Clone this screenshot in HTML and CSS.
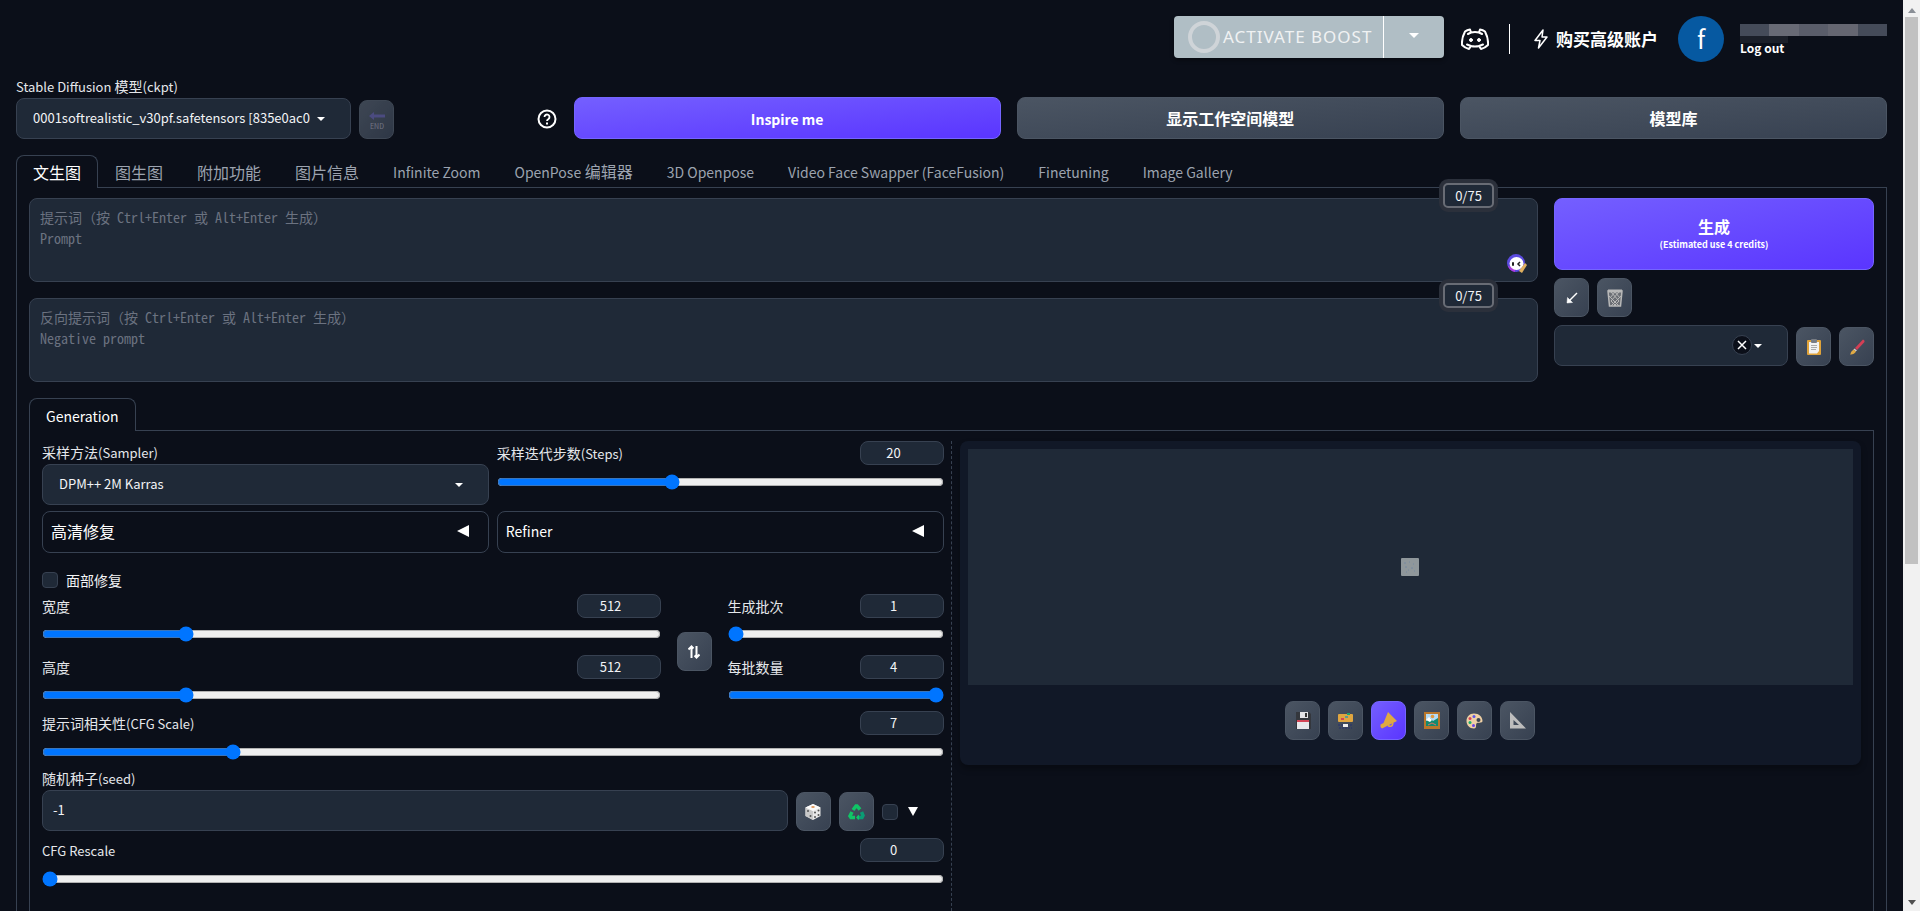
FILE: index.html
```html
<!DOCTYPE html>
<html lang="zh-CN">
<head>
  <meta charset="UTF-8">
  <title>Stable Diffusion</title>
  <link rel="stylesheet" href="styles.css">
</head>
<body>
<div class="page">

  <!-- Header -->
  <header class="topbar">
    <div class="boost">
      <button class="boost-main"><span class="boost-ring"></span>ACTIVATE BOOST</button>
      <button class="boost-drop" aria-label="Boost options"><span class="caret"></span></button>
    </div>
    <a class="discord" href="#" aria-label="Discord">
      <svg width="28" height="24" viewBox="0 0 28 24" fill="none" stroke="#fff" stroke-width="2" stroke-linejoin="round" stroke-linecap="round">
        <path d="M10 5.500Q14 4.500 18 5.500L19 2.500Q22 3 24 4.500Q27.500 11 27 18Q24 21 20 22L18 19Q14 20 10 19L8 22Q4 21 1 18Q.500 11 4 4.500Q6 3 9 2.500L10 5.500L7 7M18 5.500L21 7M6 17.500L10 19M18 19L22 17.500"/>
        <circle cx="10" cy="13" r="1.500" fill="#fff" stroke-width="1"/>
        <circle cx="18" cy="13" r="1.500" fill="#fff" stroke-width="1"/>
      </svg>
    </a>
    <span class="divider"></span>
    <a class="premium" href="#">
      <svg width="14" height="20" viewBox="0 0 14 20" fill="none" stroke="#fff" stroke-width="1.500" stroke-linejoin="round"><path d="M9 1L1 11.500H6L4.500 19L13 8H8L9 1Z"/></svg>
      购买高级账户
    </a>
    <div class="user">
      <span class="avatar">f</span>
      <div class="user-info">
        <div class="user-name"><i></i><i></i><i></i><i></i><i></i></div>
        <a href="#">Log out</a>
        <span class="user-mask"></span>
      </div>
    </div>
  </header>

  <!-- Model row -->
  <div class="model-row">
    <div class="model-box">
      <div class="field model-field">
        <label for="model"><span class="latin">Stable Diffusion</span> 模型<span class="latin">(ckpt)</span></label>
        <div class="select">
          <select id="model"><option>0001softrealistic_v30pf.safetensors [835e0ac023]</option></select>
          <span class="caret"></span>
        </div>
      </div>
      <button class="tool dim" aria-label="Refresh">
        <svg width="18" height="20" viewBox="0 0 18 20"><path d="M1 6L6 2V4.500H17V7.500H6V10Z" fill="#5b5a9a"/><text x="9" y="19" text-anchor="middle" class="end-text">END</text></svg>
      </button>
    </div>
    <button class="help" aria-label="Help">
      <svg width="20" height="20" viewBox="0 0 20 20" fill="none" stroke="#fff" stroke-width="2"><circle cx="10" cy="10" r="8.500"/><path d="M7.500 8A2.500 2.500 0 1 1 11.500 10C10.400 10.700 10 11 10 12" stroke-width="1.800"/><path d="M10 13.500V15.500"/></svg>
    </button>
    <div class="model-actions">
      <button class="btn primary"><span class="latin-lg">Inspire me</span></button>
      <button class="btn">显示工作空间模型</button>
      <button class="btn">模型库</button>
    </div>
  </div>

  <!-- Main tabs -->
  <nav class="tabs main-tabs">
    <button class="tab active">文生图</button>
    <button class="tab">图生图</button>
    <button class="tab">附加功能</button>
    <button class="tab">图片信息</button>
    <button class="tab"><span class="latin-lg">Infinite Zoom</span></button>
    <button class="tab"><span class="latin-lg">OpenPose</span> 编辑器</button>
    <button class="tab"><span class="latin-lg">3D Openpose</span></button>
    <button class="tab"><span class="latin-lg">Video Face Swapper (FaceFusion)</span></button>
    <button class="tab"><span class="latin-lg">Finetuning</span></button>
    <button class="tab"><span class="latin-lg">Image Gallery</span></button>
  </nav>

  <main class="panel">
    <div class="prompt-row">
      <div class="prompts">
        <div class="prompt">
          <textarea aria-label="Prompt" placeholder="提示词（按 Ctrl+Enter 或 Alt+Enter 生成）&#10;Prompt"></textarea>
          <span class="counter">0/75</span>
          <svg class="face" width="20" height="20" viewBox="0 0 20 20">
            <circle cx="9" cy="9" r="9" fill="#5b4be0"/><path d="M1 12A9 9 0 0 0 8 18L8 14Z" fill="#b03be0"/>
            <ellipse cx="9.500" cy="9.500" rx="7" ry="6.500" fill="#fff"/>
            <rect x="5" y="8" width="2" height="4" rx="1" fill="#222"/><path d="M13 8L11 10L13 12" stroke="#222" stroke-width="1.500" fill="none"/>
            <path d="M12 17L18 9L20 11L15 19Z" fill="#e0b060"/>
          </svg>
        </div>
        <div class="prompt">
          <textarea aria-label="Negative prompt" placeholder="反向提示词（按 Ctrl+Enter 或 Alt+Enter 生成）&#10;Negative prompt"></textarea>
          <span class="counter">0/75</span>
        </div>
      </div>

      <div class="generate-col">
        <button class="btn primary generate">生成<small>(Estimated use 4 credits)</small></button>
        <div class="tools">
          <button class="tool" aria-label="Read parameters">
            <svg width="14" height="14" viewBox="0 0 14 14" stroke="#fff" stroke-width="1.500" fill="#fff"><path d="M12 2L4 10"/><path d="M2.500 6.500L7.500 11.500L2 12Z" stroke-width=".5"/></svg>
          </button>
          <button class="tool" aria-label="Clear prompt">
            <svg width="16" height="18" viewBox="0 0 16 18" fill="none" stroke="#b8b8b8"><path d="M1 2H15L13.500 17H2.500Z" stroke-width="1.500" fill="#6b6e74"/><path d="M1 2H15" stroke-width="3"/><path d="M4 3L12 12L7 17M8 3L13 9M12 3L4 12L9 17M8 3L3 9M2 7L12 17M14 7L4 17"/></svg>
          </button>
        </div>
        <div class="tools styles-row">
          <div class="select styles-select">
            <select aria-label="Styles"><option></option></select>
            <span class="clear"><svg width="10" height="10" viewBox="0 0 10 10" stroke="#fff" stroke-width="1.500"><path d="M1 1L9 9M9 1L1 9"/></svg></span>
            <span class="caret"></span>
          </div>
          <button class="tool" aria-label="Apply styles">
            <svg width="14" height="18" viewBox="0 0 14 18"><rect x="0" y="2" width="14" height="15" rx="1" fill="#e0a33a"/><path d="M2 4H12V13L10 15.500H2Z" fill="#f2f2f2"/><rect x="4" y="1" width="6" height="4" rx="1" fill="#777c84"/><path d="M4 7.500H10M4 9.500H10M4 11.500H9" stroke="#aaa"/></svg>
          </button>
          <button class="tool" aria-label="Save style">
            <svg width="16" height="16" viewBox="0 0 16 16"><path d="M6 9L14 .5Q16 1 15.500 3L8 11Z" fill="#d33f55"/><path d="M5.500 9.500L8 11.500L6.500 12.500L4.500 10.500Z" fill="#ccc"/><path d="M4.500 10.500L7 12.500Q5 16 1 15.500Q2 14 2 13Z" fill="#e0aa44"/></svg>
          </button>
        </div>
      </div>
    </div>

    <nav class="tabs">
      <button class="tab active"><span class="latin-lg">Generation</span></button>
    </nav>

    <div class="panel generation">
      <div class="settings">
        <div class="pair">
          <div class="field">
            <label for="sampler">采样方法<span class="latin">(Sampler)</span></label>
            <div class="select">
              <select id="sampler"><option>DPM++ 2M Karras</option></select>
              <span class="caret"></span>
            </div>
          </div>
          <div class="slider">
            <div class="slider-head"><label for="steps">采样迭代步数<span class="latin">(Steps)</span></label><input type="number" id="steps" value="20"></div>
            <input type="range" aria-label="Steps" min="1" max="50" value="20">
          </div>
        </div>

        <div class="pair accordions">
          <button class="accordion">高清修复<svg width="12" height="12" viewBox="0 0 12 12" fill="#fff"><path d="M0 6L12 0V12Z"/></svg></button>
          <button class="accordion"><span class="latin-lg">Refiner</span><svg width="12" height="12" viewBox="0 0 12 12" fill="#fff"><path d="M0 6L12 0V12Z"/></svg></button>
        </div>

        <label class="check"><input type="checkbox">面部修复</label>

        <div class="size-row">
          <div class="sliders size-sliders">
            <div class="slider">
              <div class="slider-head"><label for="width">宽度</label><input type="number" id="width" value="512"></div>
              <input type="range" aria-label="Width" min="64" max="2048" value="512">
            </div>
            <div class="slider">
              <div class="slider-head"><label for="height">高度</label><input type="number" id="height" value="512"></div>
              <input type="range" aria-label="Height" min="64" max="2048" value="512">
            </div>
          </div>
          <button class="tool swap" aria-label="Swap width and height">
            <svg width="12" height="14" viewBox="0 0 12 14" fill="none" stroke="#fff" stroke-width="2"><path d="M3.500 13V2M.5 4.500L3.500 1.500L5.500 3.500M8.500 1V12M6.500 10.500L8.500 12.500L11.500 9.500"/></svg>
          </button>
          <div class="sliders batch-sliders">
            <div class="slider">
              <div class="slider-head"><label for="batches">生成批次</label><input type="number" id="batches" value="1"></div>
              <input type="range" aria-label="Batch count" min="1" max="4" value="1">
            </div>
            <div class="slider">
              <div class="slider-head"><label for="batch-size">每批数量</label><input type="number" id="batch-size" value="4"></div>
              <input type="range" aria-label="Batch size" min="1" max="4" value="4">
            </div>
          </div>
        </div>

        <div class="slider">
          <div class="slider-head"><label for="cfg">提示词相关性<span class="latin">(CFG Scale)</span></label><input type="number" id="cfg" value="7"></div>
          <input type="range" aria-label="CFG Scale" min="1" max="30" value="7">
        </div>

        <div class="seed-row">
          <div class="field seed-field">
            <label for="seed">随机种子<span class="latin">(seed)</span></label>
            <input class="seed" type="text" id="seed" value="-1">
          </div>
          <button class="tool" aria-label="Random seed">
            <svg width="16" height="18" viewBox="0 0 16 18"><path d="M8 1L15.500 4.500V13L8 17L.5 13V4.500Z" fill="#e8e8e8"/><path d="M.5 4.500L8 8V17L.5 13Z" fill="#c9c9c9"/><path d="M.5 4.500L8 1L15.500 4.500L8 8Z" fill="#fafafa"/><ellipse cx="8" cy="4" rx="1.800" ry="1" fill="#e09a60"/><g fill="#555"><circle cx="3" cy="8" r="1"/><circle cx="5.500" cy="13" r="1"/><circle cx="10" cy="9.500" r="1"/><circle cx="13.500" cy="7.500" r="1"/><circle cx="10" cy="14" r="1"/><circle cx="13.500" cy="12" r="1"/></g></svg>
          </button>
          <button class="tool" aria-label="Reuse seed">
            <svg width="17" height="16" viewBox="0 0 17 16" fill="none" stroke="#10c566" stroke-width="3.500"><path d="M5 6L8 2H9L12 5.500"/><path d="M13.500 8L15 11.500L14 13.500H9" stroke="#0a9c74"/><path d="M7 13.500H3L2 12L4 8"/><path d="M8 13.500L11 10.500V16Z" stroke="none" fill="#10c566"/></svg>
          </button>
          <label class="extra"><input type="checkbox" aria-label="Extra"><svg width="10" height="9" viewBox="0 0 10 9" fill="#fff"><path d="M0 0H10L5 9Z"/></svg></label>
        </div>

        <div class="slider">
          <div class="slider-head"><label for="rescale"><span class="latin">CFG Rescale</span></label><input type="number" id="rescale" value="0"></div>
          <input type="range" aria-label="CFG Rescale" min="0" max="1" value="0">
        </div>
      </div>

      <section class="output">
        <div class="output-box">
          <div class="preview">
            <svg width="18" height="18" viewBox="0 0 18 18"><rect width="18" height="18" rx="1" fill="#8f979b"/><path d="M3 5H5M8 4H9M12 6H13M4 9H6M10 10H12M7 12H8M13 13H14M5 14H6" stroke="#7488a0"/></svg>
          </div>
          <div class="tools output-tools">
            <button class="tool" aria-label="Save">
              <svg width="16" height="18" viewBox="0 0 16 18"><path d="M1 0H14L16 2V17H1Z" fill="#34373d"/><rect x="5" y="0" width="8" height="6" fill="#e3e3e6"/><rect x="10" y="1" width="2" height="4" fill="#333"/><rect x="2" y="8" width="12" height="9" fill="#e8e8ec"/><rect x="2" y="8" width="12" height="2" fill="#d34557"/></svg>
            </button>
            <button class="tool" aria-label="Save zip">
              <svg width="17" height="16" viewBox="0 0 17 16"><rect x="1" y="1" width="15" height="8" rx="1" fill="#e0a640"/><path d="M10 1H13" stroke="#20a070" stroke-width="2"/><path d="M8 4H11" stroke="#5d9a94" stroke-width="2"/><path d="M4 6H7" stroke="#d34557" stroke-width="2"/><path d="M1 12H16M2 15H15" stroke="#27306f" stroke-dasharray="2 1"/><rect x="6" y="11" width="5" height="3" fill="#eee"/></svg>
            </button>
            <button class="tool primary" aria-label="Send to img2img">
              <svg width="17" height="17" viewBox="0 0 17 17"><path d="M8 0L17 9L2 16.500L.5 15V12.500L3.500 11Z" fill="#e0aa40"/><path d="M8 13.500Q12 16 13 11" fill="none" stroke="#e0aa40" stroke-width="1.500"/></svg>
            </button>
            <button class="tool" aria-label="Send to inpaint">
              <svg width="16" height="17" viewBox="0 0 16 17"><rect width="16" height="17" fill="#b9772c"/><rect x="2" y="2" width="12" height="12" fill="#b5dcf5"/><path d="M2 9L6 6L9 9L14 6V14H2Z" fill="#128a70"/><path d="M2 8L5 5L8 8L6 10Z" fill="#fff"/><circle cx="8.500" cy="4.500" r="1.800" fill="#e09a40"/><path d="M4 13L8 11L12 13" stroke="#e07060" fill="none"/></svg>
            </button>
            <button class="tool" aria-label="Send to extras">
              <svg width="17" height="16" viewBox="0 0 17 16"><path d="M8 .5C13 .5 16.500 4 16.500 8C16.500 10 13 9.500 11 10C9 10.500 11.500 15.500 8 15.500C3.500 15.500 .5 12 .5 8S3.500 .5 8 .5Z" fill="#efd0a5"/><circle cx="12.500" cy="7" r="2" fill="#3d4654"/><circle cx="8" cy="3.500" r="1.500" fill="#5a55e8"/><circle cx="4" cy="5.500" r="1.500" fill="#d34557"/><circle cx="4" cy="9.500" r="1.500" fill="#19b070"/><circle cx="7.500" cy="12.500" r="1.500" fill="#6a45e8"/></svg>
            </button>
            <button class="tool" aria-label="Upscale">
              <svg width="16" height="17" viewBox="0 0 16 17"><path d="M0 0L16 16.500H0ZM3.500 8V13H9Z" fill="#bdbdbd" fill-rule="evenodd"/></svg>
            </button>
          </div>
        </div>
      </section>
    </div>
  </main>
</div>

<!-- Scrollbar -->
<div class="scrollbar">
  <span class="arrow up"></span>
  <span class="thumb"></span>
  <span class="arrow down"></span>
</div>
</body>
</html>
```
FILE: styles.css
```css
* {
    box-sizing: border-box;
}

body {
    margin: 0;
    display: flex;
    height: 100vh;
    overflow: hidden;
    background: #0b0f19;
    color: #f3f4f6;
    font-family: "Noto Sans CJK SC", sans-serif;
    font-size: 14px;
    line-height: 20px;
}

button, input, select, textarea {
    font: inherit;
    color: inherit;
    margin: 0;
}

button {
    padding: 0;
    border: none;
    background: none;
}

a {
    color: white;
    text-decoration: none;
}

svg {
    display: block;
    flex: none;
}

/* Latin letters run large next to the Chinese ones */
.latin {
    font-size: 13px;
}

.latin-lg {
    font-size: 14px;
}

.page {
    flex: 1;
    min-width: 0;
    display: flex;
    flex-direction: column;
    padding: 16px 16px 0;
}

/* Header */
.topbar {
    display: flex;
    justify-content: flex-end;
    align-items: center;
    height: 46px;
}

.boost {
    display: flex;
    height: 42px;
    align-self: flex-start;
    border-radius: 4px;
    background: #b0bec5;
    color: #f0f2f3;
    box-shadow: 0 2px 4px rgba(0, 0, 0, 0.4);
}

.boost-main {
    display: flex;
    align-items: center;
    width: 210px;
    padding-left: 14px;
    gap: 3px;
    border-right: 1px solid white;
    font-family: "Noto Sans", sans-serif;
    font-size: 17px;
    letter-spacing: 1px;
    white-space: nowrap;
}

.boost-ring {
    flex: none;
    width: 32px;
    height: 32px;
    border: 4px solid #cfd4d8;
    border-radius: 50%;
}

.boost-drop {
    display: flex;
    align-items: center;
    justify-content: center;
    width: 60px;
}

.caret {
    border: 4px solid transparent;
    border-top-color: white;
    border-bottom: none;
}

.boost .caret {
    border-width: 5px;
    border-bottom: none;
    margin-bottom: 4px;
}

.discord {
    margin: 0 20px 0 17px;
}

.divider {
    width: 1px;
    height: 30px;
    background: white;
}

.premium {
    display: flex;
    align-items: center;
    gap: 8px;
    margin: 0 20px 0 24px;
    font-size: 17px;
    font-weight: bold;
}

.user {
    display: flex;
    gap: 16px;
}

.avatar {
    width: 46px;
    height: 46px;
    border-radius: 50%;
    background: #0659a1;
    color: white;
    font-size: 25px;
    line-height: 44px;
    text-align: center;
}

.user-info {
    position: relative;
    width: 147px;
    padding-top: 8px;
}

.user-info a {
    display: block;
    font-size: 12px;
    font-weight: bold;
    line-height: 24px;
}

.user-name {
    display: flex;
    height: 12px;
}

.user-name i {
    flex: 1;
    background: #454b59;
}

.user-name i:nth-child(2) {
    background: #686a75;
}

.user-name i:nth-child(3) {
    background: #5a5d6a;
}

.user-name i:nth-child(4) {
    background: #656671;
}

.user-mask {
    position: absolute;
    left: 0;
    top: 20px;
    width: 48px;
    height: 7px;
    background: #1b1f29;
}

/* Model row */
.model-row {
    display: flex;
    align-items: flex-end;
    height: 77px;
}

.model-box {
    flex: 1;
    display: flex;
    align-items: flex-end;
    gap: 8px;
}

.model-field {
    width: 335px;
}

.field {
    display: flex;
    flex-direction: column;
    min-width: 0;
}

.field label {
    line-height: 23px;
    color: #e5e7eb;
}

.select {
    position: relative;
    display: flex;
}

.select select {
    appearance: none;
    width: 100%;
    height: 41px;
    padding: 0 40px 2px 16px;
    border: 1px solid #374151;
    border-radius: 8px;
    background: #1f2937;
    font-size: 13px;
}

.select .caret {
    position: absolute;
    right: 26px;
    top: 19px;
}

.tool {
    display: flex;
    flex: none;
    align-items: center;
    justify-content: center;
    width: 35px;
    height: 39px;
    border: 1px solid #4b5563;
    border-radius: 8px;
    background: linear-gradient(to bottom right, #4b5563, #374151);
}

.tool.dim {
    opacity: 0.8;
}

.end-text {
    font-size: 7px;
    fill: #8e8fa0;
}

.help {
    margin: 0 17px 10px;
}

.btn {
    height: 42px;
    border: 1px solid #4b5563;
    border-radius: 8px;
    background: linear-gradient(to bottom right, #4b5563, #374151);
    color: white;
    font-size: 16px;
    font-weight: 600;
}

.primary {
    border-color: #7565ff;
    background: linear-gradient(to bottom right, #745fff, #5a35ff);
}

.model-actions {
    display: flex;
    gap: 16px;
    width: 70.2%;
}

.model-actions .btn {
    flex: 1;
}

/* Tabs */
.tabs {
    display: flex;
    border-bottom: 1px solid #374151;
}

.main-tabs {
    margin-top: 16px;
}

.tab {
    height: 32px;
    padding: 0 16px;
    border: 1px solid transparent;
    border-bottom: none;
    color: #9ca3af;
    font-size: 16px;
    white-space: nowrap;
}

.tab.active {
    height: 33px;
    margin-bottom: -1px;
    border-color: #374151;
    border-radius: 8px 8px 0 0;
    background: #0b0f19;
    color: white;
}

.panel {
    flex: 1;
    display: flex;
    flex-direction: column;
    padding: 10px 12px 0;
    border: 1px solid #374151;
    border-width: 0 1px;
}

/* Prompts */
.prompt-row {
    display: flex;
    gap: 16px;
    margin-bottom: 16px;
}

.prompts {
    flex: 1;
    display: flex;
    flex-direction: column;
    gap: 16px;
}

.prompt {
    position: relative;
    display: flex;
}

.prompt textarea {
    width: 100%;
    height: 84px;
    padding: 8px 10px;
    border: 1px solid #374151;
    border-radius: 8px;
    background: #1f2937;
    font-family: "Noto Sans Mono CJK SC", "Liberation Mono", "Noto Sans CJK SC", monospace;
    line-height: 21px;
    resize: none;
}

.prompt textarea::placeholder {
    color: #6b7280;
}

.counter {
    position: absolute;
    right: 44px;
    top: -15px;
    width: 51px;
    border: 2px solid #686c75;
    border-radius: 5px;
    background: #1f2937;
    box-shadow: 0 0 0 4px #2b303b;
    font-size: 13px;
    line-height: 21px;
    text-align: center;
}

.face {
    position: absolute;
    right: 11px;
    bottom: 8px;
}

.generate-col {
    display: flex;
    flex-direction: column;
    gap: 8px;
    width: 320px;
}

.generate {
    height: 72px;
    line-height: 22px;
}

.generate small {
    display: block;
    font-size: 9px;
    line-height: 16px;
}

.tools {
    display: flex;
    align-items: flex-end;
    gap: 8px;
}

.styles-select {
    flex: 1;
}

.clear {
    position: absolute;
    right: 36px;
    top: 10px;
    display: flex;
    align-items: center;
    justify-content: center;
    width: 20px;
    height: 20px;
    border: 1px solid #374151;
    border-radius: 50%;
    background: #0b0f19;
}

/* Generation */
.generation {
    flex-direction: row;
}

.settings {
    flex: 1;
    display: flex;
    flex-direction: column;
    min-width: 0;
    padding-right: 7px;
}

.pair {
    display: flex;
    gap: 8px;
}

.pair > * {
    flex: 1;
}

.accordions {
    margin: 6px 0 17px;
}

.slider {
    height: 56px;
}

.slider-head {
    display: flex;
    justify-content: space-between;
    color: #e5e7eb;
    line-height: 24px;
}

.slider-head input {
    appearance: textfield;
    width: 84px;
    height: 24px;
    padding: 0 16px 0 0;
    border: 1px solid #374151;
    border-radius: 8px;
    background: #1f2937;
    color: #f3f4f6;
    font-size: 13px;
    text-align: center;
}

.slider-head input::-webkit-inner-spin-button {
    display: none;
}

input[type="range"] {
    display: block;
    width: 100%;
    height: 16px;
    margin-top: 8px;
}

.accordion {
    display: flex;
    align-items: center;
    justify-content: space-between;
    height: 42px;
    padding: 0 19px 2px 8px;
    border: 1px solid #374151;
    border-radius: 8px;
    color: white;
    font-size: 16px;
}

.check {
    display: flex;
    align-items: center;
    gap: 8px;
    margin-bottom: 4px;
}

input[type="checkbox"] {
    appearance: none;
    width: 16px;
    height: 16px;
    border: 1px solid #374151;
    border-radius: 4px;
    background: #1f2937;
}

.size-row {
    display: flex;
    align-items: flex-start;
    gap: 16px;
}

.sliders {
    display: flex;
    flex-direction: column;
    gap: 5px;
}

.size-sliders {
    flex: 1;
}

.batch-sliders {
    width: 216px;
}

.swap {
    margin-top: 38px;
}

.seed-row {
    display: flex;
    align-items: flex-end;
    gap: 8px;
    margin-bottom: 7px;
}

.seed-field {
    flex: 1;
}

.seed {
    height: 41px;
    padding: 0 10px 2px;
    border: 1px solid #374151;
    border-radius: 8px;
    background: #1f2937;
    font-size: 13px;
}

.extra {
    display: flex;
    align-items: center;
    gap: 10px;
    width: 62px;
    height: 39px;
}

/* Output */
.output {
    flex: 1;
    min-width: 0;
    padding-left: 8px;
    border-left: 1px dashed #374151;
}

.output-box {
    padding: 8px 8px 25px;
    border-radius: 8px;
    background: #111827;
    box-shadow: 0 4px 6px rgba(0, 0, 0, 0.3);
}

.preview {
    display: flex;
    align-items: center;
    justify-content: center;
    height: 236px;
    background: #1f2937;
}

.output-tools {
    justify-content: center;
    margin-top: 16px;
}

/* Scrollbar */
.scrollbar {
    display: flex;
    flex-direction: column;
    align-items: center;
    width: 17px;
    background: #f1f1f1;
}

.arrow {
    margin: 8px 0 4px;
    border: 4px solid transparent;
    border-bottom: 5px solid #8a8f96;
    border-top: none;
}

.arrow.down {
    margin: auto 0 6px;
    border-top: 5px solid #505050;
    border-bottom: none;
}

.thumb {
    width: 13px;
    height: 60%;
    background: #c1c1c1;
}
```
